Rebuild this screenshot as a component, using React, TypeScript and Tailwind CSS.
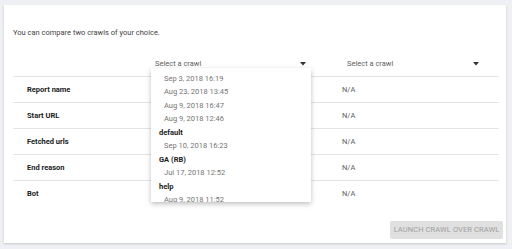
const rows = ["Report name", "Start URL", "Fetched urls", "End reason", "Bot"];

const menu: { label: string; group?: boolean }[] = [
  { label: "Sep 3, 2018 16:19" },
  { label: "Aug 23, 2018 13:45" },
  { label: "Aug 9, 2018 16:47" },
  { label: "Aug 9, 2018 12:46" },
  { label: "default", group: true },
  { label: "Sep 10, 2018 16:23" },
  { label: "GA (RB)", group: true },
  { label: "Jul 17, 2018 12:52" },
  { label: "help", group: true },
  { label: "Aug 9, 2018 11:52" },
];

const Arrow = () => (
  <svg width="6" height="4" viewBox="0 0 6 4" className="shrink-0">
    <path d="M0 0h6L3 3.5z" fill="#333" />
  </svg>
);

const Select = ({ width }: { width: string }) => (
  <div className={`flex h-full items-center justify-between pl-[5px] pr-[3px] ${width}`}>
    <span className="text-[#616161]">Select a crawl</span>
    <Arrow />
  </div>
);

export default function App() {
  return (
    <div
      className="h-[249px] w-[512px] overflow-hidden bg-[#eef0f3] pt-[5px] pl-[4px] pr-[6px] text-[7.5px] leading-[10px]"
      style={{ fontFamily: "Roboto, 'Liberation Sans', sans-serif" }}
    >
      <div className="relative flex h-[238px] flex-col bg-white pt-[23px] pl-[9px] pr-[3px] shadow-[0_1px_2px_rgba(0,0,0,0.18)]">
        <p className="text-[#424242]">You can compare two crawls of your choice.</p>

        <div className="mt-[13px] grid w-[486px] grid-cols-[137px_192px_157px]">
          {/* header */}
          <div className="h-[26px] border-b border-[#e3e3e3]" />
          <div className="relative h-[26px] border-b border-[#e3e3e3]">
            <Select width="w-[159px]" />
            {/* open dropdown */}
            <div className="absolute left-[1px] top-[17px] z-10 h-[134px] w-[160px] overflow-hidden bg-white pt-[4px] shadow-[0_2px_5px_rgba(0,0,0,0.25)]">
              {menu.map((m) => (
                <div
                  key={m.label}
                  className={`flex h-[13.5px] items-center ${
                    m.group ? "pl-[8px] font-bold text-[#212121]" : "pl-[13px] text-[#757575]"
                  }`}
                >
                  {m.label}
                </div>
              ))}
            </div>
          </div>
          <div className="h-[26px] border-b border-[#e3e3e3]">
            <Select width="w-[140px]" />
          </div>

          {rows.map((r, i) => {
            const line = i < rows.length - 1 ? "border-b border-[#e3e3e3]" : "";
            return (
              <div key={r} className="contents">
                <div className={`flex h-[26px] items-center pl-[14px] font-bold text-[#212121] ${line}`}>
                  {r}
                </div>
                <div className={`flex h-[26px] items-center pl-[8px] text-[#616161] ${line}`}>N/A</div>
                <div className={`flex h-[26px] items-center text-[#616161] ${line}`}>N/A</div>
              </div>
            );
          })}
        </div>

        <div className="mt-[14px] flex justify-end">
          <button className="h-[18px] w-[113px] rounded-[2px] bg-[#e0e0e0] text-[7.5px] tracking-[0.1px] text-[#9e9e9e]">
            LAUNCH CRAWL OVER CRAWL
          </button>
        </div>
      </div>
    </div>
  );
}
